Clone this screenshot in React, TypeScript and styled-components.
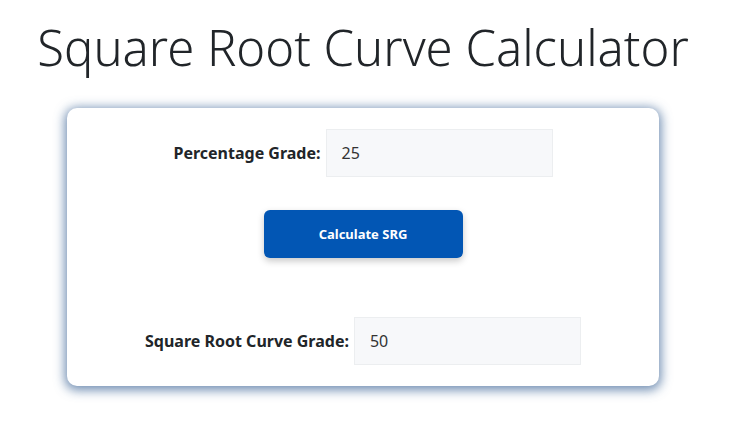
import React from "react";
import styled, { createGlobalStyle } from "styled-components";

const Global = createGlobalStyle`
  html, body { margin: 0; padding: 0; background: #fff; }
  body { font-family: "Noto Sans", "Open Sans", sans-serif; color: #212529; }
`;

const Page = styled.div`
  display: flex;
  flex-direction: column;
  align-items: center;
  padding: 17px 16px 40px 0;
`;

const Title = styled.h1`
  margin: 0;
  font-family: "Noto Sans", sans-serif;
  font-weight: 300;
  font-size: 49px;
  line-height: 61px;
  color: #212529;
`;

const Card = styled.div`
  margin-top: 30px;
  width: 592px;
  height: 278px;
  box-sizing: border-box;
  background: #fff;
  border-radius: 10px;
  box-shadow: 0 2px 11px 2px rgba(60, 100, 150, 0.75);
  display: flex;
  flex-direction: column;
  align-items: center;
  padding-top: 21px;
`;

const Row = styled.div<{ $top?: number }>`
  display: flex;
  align-items: center;
  gap: 5px;
  margin-top: ${(p) => p.$top ?? 0}px;
`;

const Label = styled.label`
  font-weight: 700;
  font-size: 16px;
  color: #212529;
`;

const Field = styled.div`
  width: 227px;
  height: 48px;
  box-sizing: border-box;
  background: #f7f8fa;
  border: 1px solid #eceef0;
  display: flex;
  align-items: center;
  padding-left: 15px;
  font-size: 16px;
  color: #333;
`;

const Button = styled.button`
  margin-top: 33px;
  width: 199px;
  height: 48px;
  border: none;
  border-radius: 6px;
  background: #0256b4;
  color: #fff;
  font-family: "Noto Sans", sans-serif;
  font-weight: 700;
  font-size: 13px;
  box-shadow: 0 3px 7px rgba(0, 0, 0, 0.22);
  cursor: pointer;
`;

export default function App() {
  return (
    <>
      <Global />
      <Page>
        <Title>Square Root Curve Calculator</Title>
        <Card>
          <Row>
            <Label>Percentage Grade:</Label>
            <Field>25</Field>
          </Row>
          <Button>Calculate SRG</Button>
          <Row $top={59}>
            <Label>Square Root Curve Grade:</Label>
            <Field>50</Field>
          </Row>
        </Card>
      </Page>
    </>
  );
}
